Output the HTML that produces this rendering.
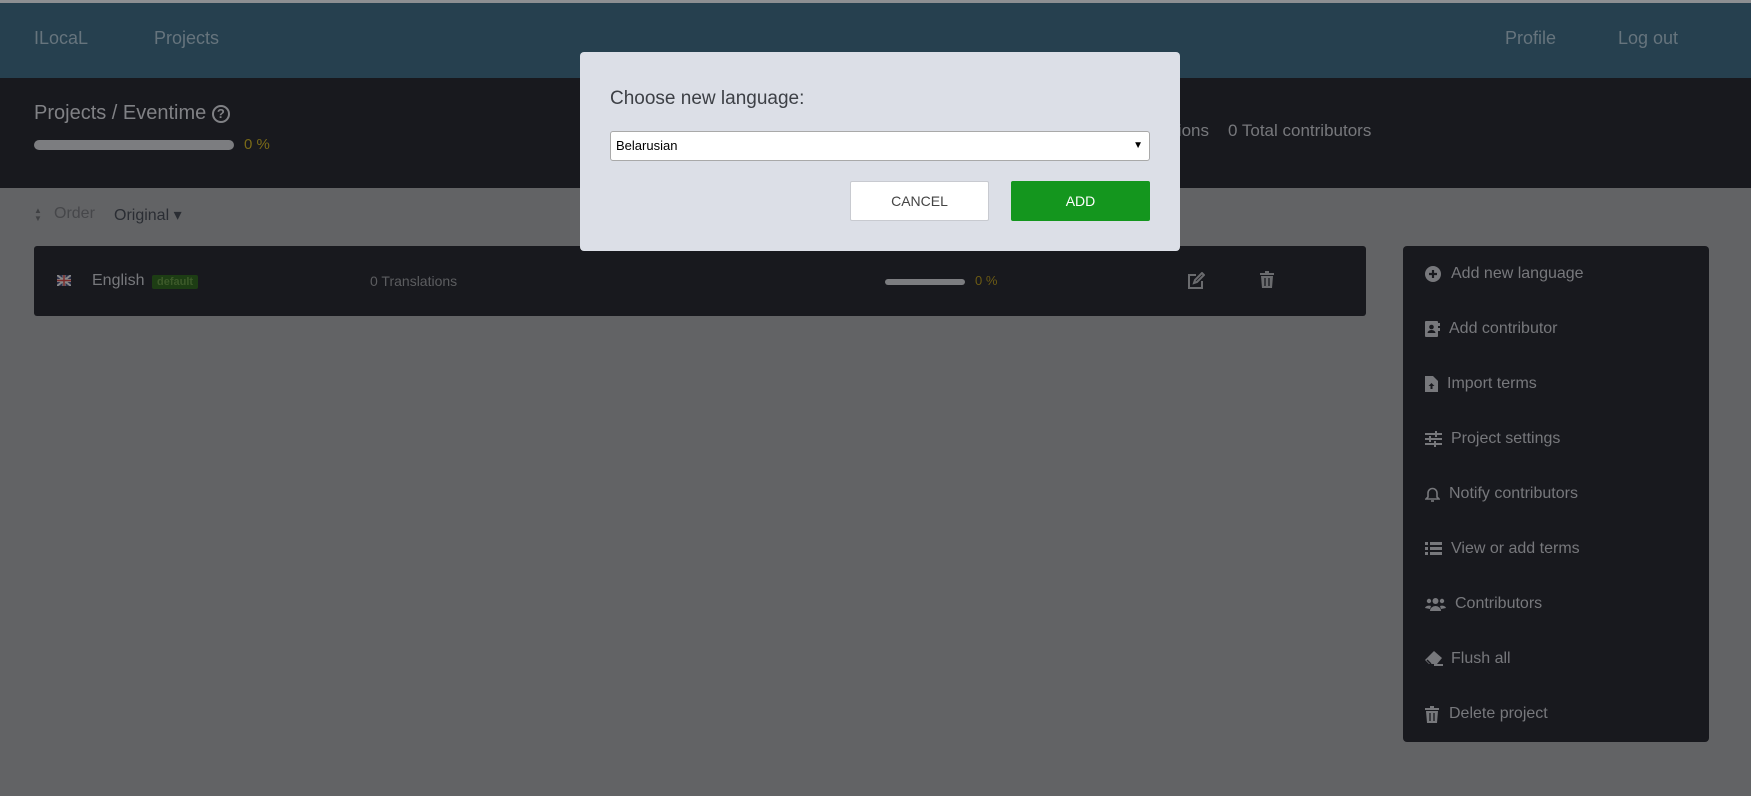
<!DOCTYPE html>
<html><head><meta charset="utf-8"><style>
*{box-sizing:border-box;margin:0;padding:0}
body{width:1751px;height:796px;background:#626365;font-family:"Liberation Sans",sans-serif;position:relative;overflow:hidden}
.abs{position:absolute;white-space:nowrap}
.top{position:absolute;left:0;top:0;width:1751px;height:3px;background:#8d8f92}
.hdr{position:absolute;left:0;top:3px;width:1751px;height:75px;background:#26404f}
.hdr span{position:absolute;top:25px;font-size:18px;color:#66747d}
.band{position:absolute;left:0;top:78px;width:1751px;height:110px;background:#18191e}
.card{position:absolute;left:34px;top:246px;width:1332px;height:70px;background:#18191e;border-radius:3px}
.side{position:absolute;left:1403px;top:246px;width:306px;height:496px;background:#18191e;border-radius:4px}
.item{position:absolute;left:22px;font-size:16px;color:#77787c;height:20px;line-height:20px}
.item svg{position:absolute;left:0;top:2px}
.item b{font-weight:normal;position:absolute;left:26px;white-space:nowrap}
.bar{position:absolute;background:#7c7d80;border-radius:5px}
.modal{position:absolute;left:580px;top:52px;width:600px;height:199px;background:#dcdfe7;border-radius:4px}
</style></head><body>
<div class="top"></div>
<div class="hdr">
<span style="left:34px">ILocaL</span>
<span style="left:154px">Projects</span>
<span style="left:1505px">Profile</span>
<span style="left:1618px">Log out</span>
</div>
<div class="band">
<div class="abs" style="left:34px;top:24px;font-size:20px;color:#808185">Projects / Eventime <span style="display:inline-block;width:18px;height:18px;border:2px solid #808185;border-radius:50%;font-size:13px;text-align:center;line-height:14px;font-weight:bold;vertical-align:1px">?</span></div>
<div class="bar" style="left:34px;top:62px;width:200px;height:10px"></div>
<div class="abs" style="left:244px;top:58px;font-size:15px;color:#7a6a18">0 %</div>
<div class="abs" style="right:542px;top:43px;font-size:17px;color:#77787c">0 Translations</div>
<div class="abs" style="left:1228px;top:43px;font-size:17px;color:#77787c">0 Total contributors</div>
</div>
<div class="abs" style="left:34px;top:207px;font-size:8px;color:#3f4043;line-height:8px">▲<br>▼</div>
<div class="abs" style="left:54px;top:205px;font-size:16px;color:#46474a">Order</div>
<div class="abs" style="left:114px;top:205px;font-size:16px;color:#2a2d33">Original ▾</div>
<div class="card">
<svg class="abs" style="left:23px;top:29px" width="14" height="11" viewBox="0 0 14 11"><rect width="14" height="11" fill="#2a2f4a"/><path d="M0 0L14 11M14 0L0 11" stroke="#888" stroke-width="2"/><path d="M7 0V11M0 5.5H14" stroke="#888" stroke-width="3"/><path d="M7 0V11M0 5.5H14" stroke="#7a2a2a" stroke-width="1.5"/></svg>
<div class="abs" style="left:58px;top:26px;font-size:16px;color:#77787c">English</div>
<div class="abs" style="left:118px;top:29px;font-size:11px;font-weight:bold;color:#3d5a2a;background:#1d3d14;padding:1px 5px;border-radius:2px">default</div>
<div class="abs" style="left:336px;top:27px;font-size:14px;color:#5c5d60">0 Translations</div>
<div class="bar" style="left:851px;top:33px;width:80px;height:6px"></div>
<div class="abs" style="left:941px;top:27px;font-size:13px;color:#6b5a14">0 %</div>
<svg class="abs" style="left:1153px;top:26px" width="18" height="18" viewBox="0 0 18 18" fill="none" stroke="#6a6b6e" stroke-width="2"><path d="M9 3H2v13h13V9"/><path d="M7 11l1-3 7-7 2 2-7 7z"/></svg>
<svg class="abs" style="left:1226px;top:25px" width="14" height="17" viewBox="0 0 14 17" fill="#6a6b6e"><rect x="0" y="2" width="14" height="2"/><rect x="5" y="0" width="4" height="2"/><path d="M1 5h12l-1 12H2z"/><path d="M5 7v8M9 7v8" stroke="#18191e" stroke-width="1.3"/></svg>
</div>
<div class="side">
<div class="item" style="top:18px"><svg width="16" height="16" viewBox="0 0 16 16"><circle cx="8" cy="8" r="8" fill="#77787c"/><path d="M8 4v8M4 8h8" stroke="#18191e" stroke-width="2.2"/></svg><b>Add new language</b></div>
<div class="item" style="top:73px"><svg width="15" height="16" viewBox="0 0 15 16"><rect x="0" y="0" width="13" height="16" rx="1" fill="#77787c"/><circle cx="6.5" cy="6" r="2.3" fill="#18191e"/><path d="M2.5 12a4 3 0 0 1 8 0z" fill="#18191e"/><rect x="13" y="2" width="2" height="3" fill="#77787c"/><rect x="13" y="7" width="2" height="3" fill="#77787c"/></svg><b style="left:24px">Add contributor</b></div>
<div class="item" style="top:128px"><svg width="13" height="16" viewBox="0 0 13 16"><path d="M0 0h8l5 5v11H0z" fill="#77787c"/><path d="M6.5 7l-3 3h2v3h2v-3h2z" fill="#18191e"/></svg><b style="left:22px">Import terms</b></div>
<div class="item" style="top:183px"><svg width="17" height="16" viewBox="0 0 17 16" fill="#77787c"><rect y="2" width="17" height="2"/><rect y="7" width="17" height="2"/><rect y="12" width="17" height="2"/><rect x="10" y="0" width="2" height="6"/><rect x="4" y="5" width="2" height="6"/><rect x="9" y="10" width="2" height="6"/></svg><b>Project settings</b></div>
<div class="item" style="top:238px"><svg width="15" height="16" viewBox="0 0 15 16" fill="none" stroke="#77787c" stroke-width="1.6"><path d="M3 11V7a4.5 4.5 0 0 1 9 0v4l2 2H1z"/><path d="M6 15h3"/></svg><b style="left:24px">Notify contributors</b></div>
<div class="item" style="top:293px"><svg width="17" height="15" viewBox="0 0 17 15" fill="#77787c"><rect y="1" width="3" height="3"/><rect y="6" width="3" height="3"/><rect y="11" width="3" height="3"/><rect x="5" y="1" width="12" height="3"/><rect x="5" y="6" width="12" height="3"/><rect x="5" y="11" width="12" height="3"/></svg><b>View or add terms</b></div>
<div class="item" style="top:348px"><svg width="21" height="16" viewBox="0 0 21 16" fill="#77787c"><circle cx="10.5" cy="5" r="3"/><circle cx="4" cy="5" r="2.2"/><circle cx="17" cy="5" r="2.2"/><path d="M5 15a5.5 5 0 0 1 11 0z"/><path d="M0 12a4 3 0 0 1 6-2l-1 3z"/><path d="M21 12a4 3 0 0 0-6-2l1 3z"/></svg><b style="left:30px">Contributors</b></div>
<div class="item" style="top:403px"><svg width="18" height="15" viewBox="0 0 18 15"><path d="M9 0l8 7-5 6H4L0 9z" fill="#77787c"/><path d="M2 9l4 4" stroke="#18191e" stroke-width="1.5"/><rect x="9" y="13" width="9" height="2" fill="#77787c"/></svg><b>Flush all</b></div>
<div class="item" style="top:458px"><svg width="14" height="17" viewBox="0 0 14 17" fill="#77787c"><rect y="2" width="14" height="2"/><rect x="5" y="0" width="4" height="2"/><path d="M1 5h12l-1 12H2z"/><path d="M5 7v8M9 7v8" stroke="#18191e" stroke-width="1.3"/></svg><b style="left:24px">Delete project</b></div>
</div>
<div class="modal">
<div class="abs" style="left:30px;top:36px;font-size:19px;color:#3d4046">Choose new language:</div>
<div class="abs" style="left:30px;top:79px;width:540px;height:30px;background:#fff;border:1px solid #a9a9a9;border-radius:3px;font-size:13px;color:#000;line-height:28px;padding-left:5px">Belarusian<span style="position:absolute;right:6px;font-size:10px">▼</span></div>
<div class="abs" style="left:270px;top:129px;width:139px;height:40px;background:#fff;border:1px solid #c8cad0;border-radius:2px;font-size:14px;color:#444;text-align:center;line-height:38px">CANCEL</div>
<div class="abs" style="left:431px;top:129px;width:139px;height:40px;background:#14961e;border-radius:2px;font-size:14px;color:#fff;text-align:center;line-height:40px">ADD</div>
</div>
</body></html>
